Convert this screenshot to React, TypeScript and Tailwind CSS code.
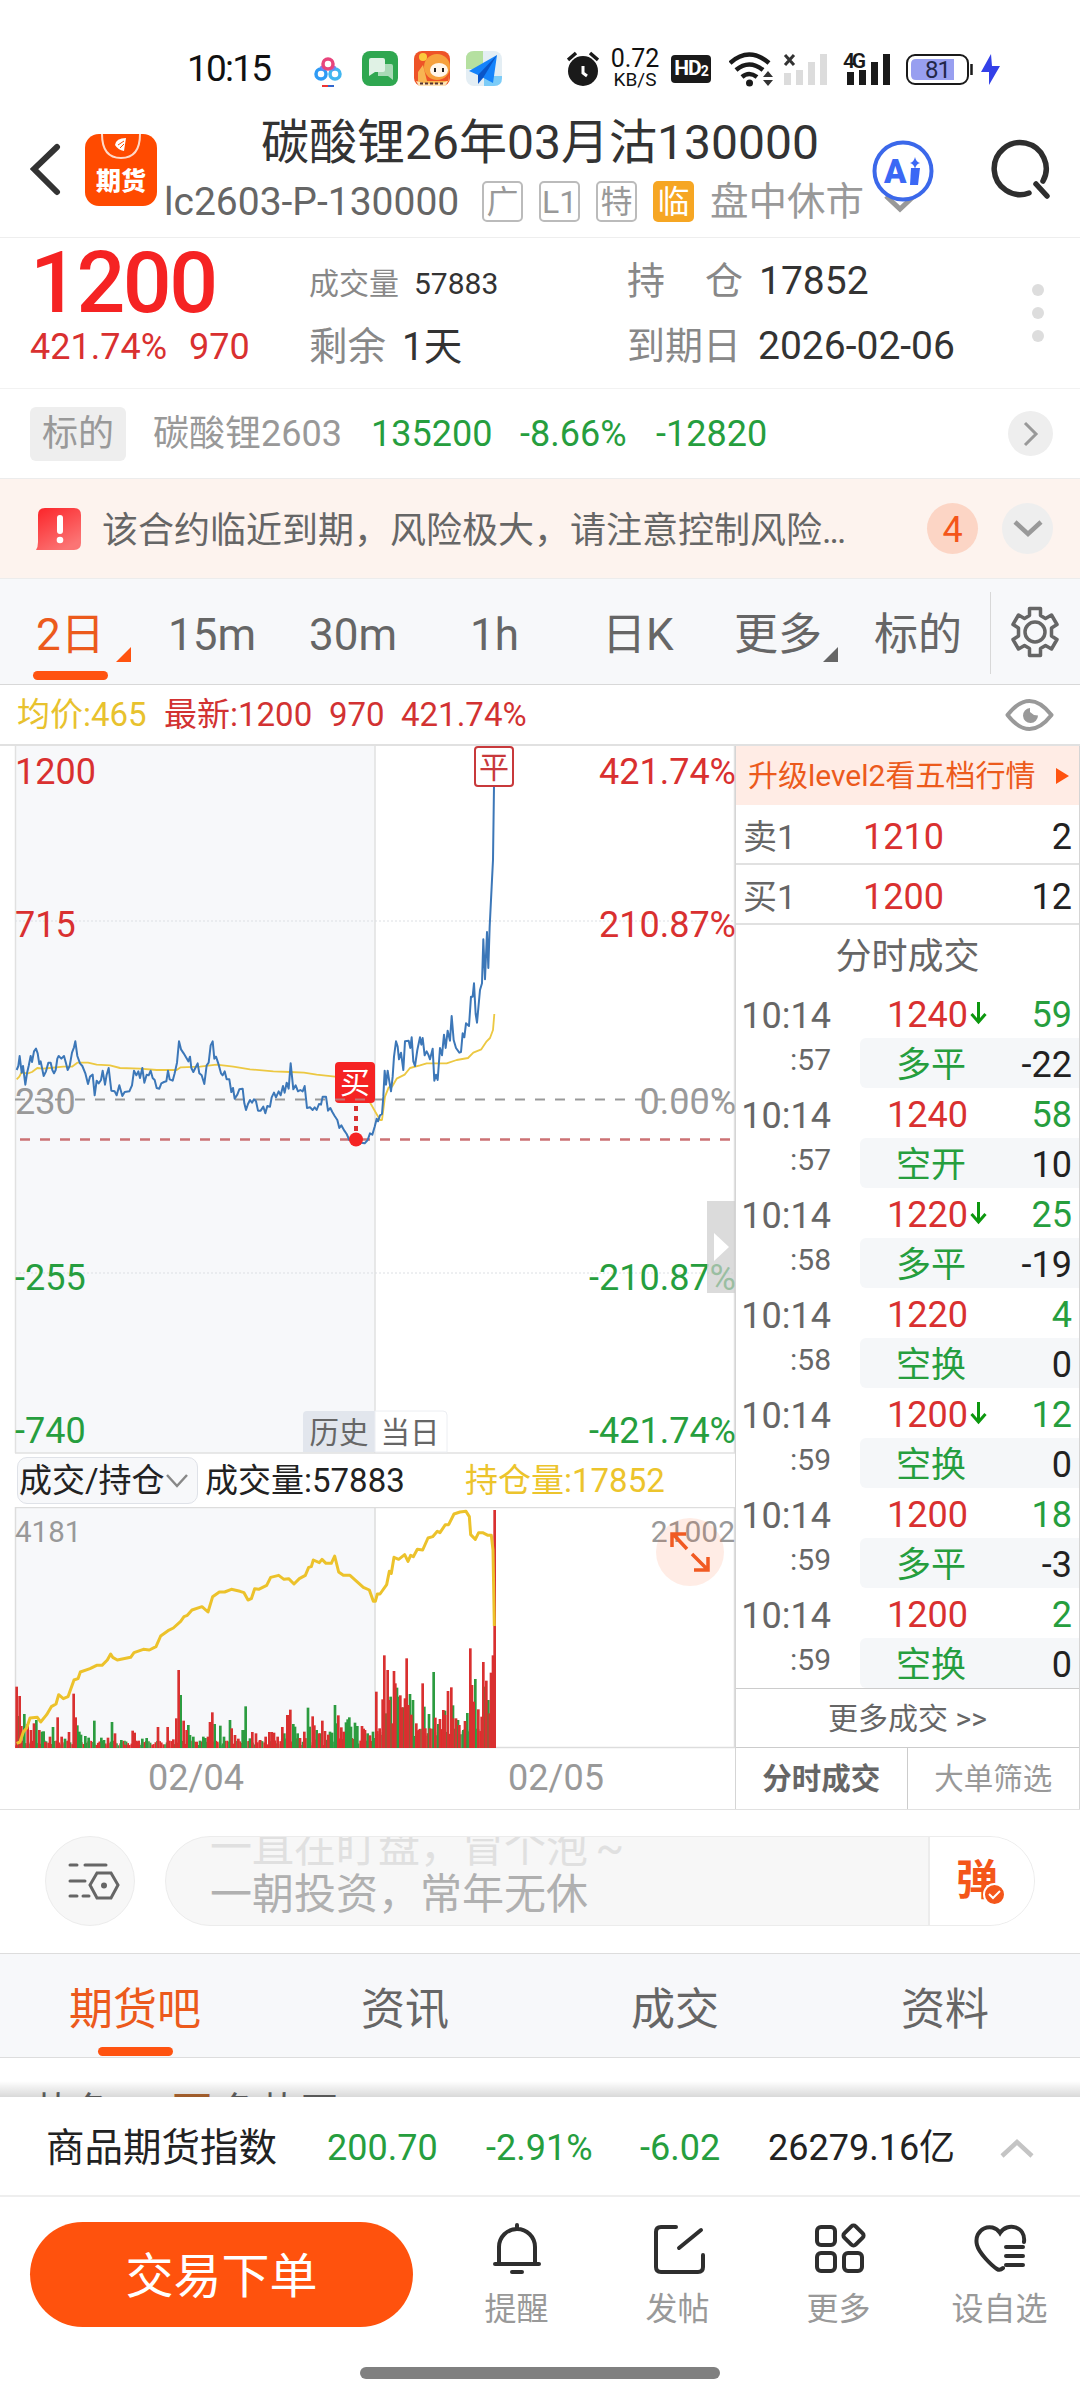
import type { ReactNode } from "react";

const ticks = [
  { sec: "57", price: 1240, down: true, vol: 59, type: "多平", diff: -22 },
  { sec: "57", price: 1240, down: false, vol: 58, type: "空开", diff: 10 },
  { sec: "58", price: 1220, down: true, vol: 25, type: "多平", diff: -19 },
  { sec: "58", price: 1220, down: false, vol: 4, type: "空换", diff: 0 },
  { sec: "59", price: 1200, down: true, vol: 12, type: "空换", diff: 0 },
  { sec: "59", price: 1200, down: false, vol: 18, type: "多平", diff: -3 },
  { sec: "59", price: 1200, down: false, vol: 2, type: "空换", diff: 0 },
];

// chart series are stored in device pixels (3 per layout pixel)
const priceLine =
  "50,990 55,978 59,948 65,998 69,978 76,1034 81,1000 86,978 92,948 96,966 102,934 108,926 113,940 118,972 122,964 131,1008 138,994 145,968 152,968 157,990 162,1000 167,990 172,956 176,948 184,956 192,948 198,970 203,990 209,978 216,938 222,922 226,904 232,948 240,970 247,978 256,1000 264,1032 270,1010 278,1004 284,1066 290,1022 296,1030 303,1020 308,992 315,1034 320,1004 326,984 334,1052 344,1054 350,1066 358,1036 367,1068 374,1056 388,1054 396,1036 402,992 409,1006 415,994 420,1014 427,984 433,1028 440,1004 446,1006 452,992 458,1014 464,1020 470,1044 478,1046 484,1030 492,1026 499,1024 504,992 509,1018 518,1022 524,1000 531,968 537,904 543,928 551,940 558,952 565,964 570,950 574,984 580,996 586,984 593,970 598,1000 605,1006 613,1032 620,976 626,968 632,916 638,904 643,956 648,950 656,974 663,1000 668,1006 674,994 680,1018 688,1018 694,1056 699,1044 704,1076 712,1064 718,1048 728,1046 733,1090 738,1110 744,1092 750,1080 756,1088 762,1078 768,1084 774,1112 782,1112 790,1100 796,1120 802,1098 810,1100 815,1072 822,1058 828,1072 836,1054 842,1066 849,1038 854,1058 860,1028 866,1046 872,970 880,1048 887,1036 894,1054 901,1050 908,1054 914,1038 921,1104 930,1102 938,1110 944,1102 950,1110 957,1092 963,1094 968,1070 978,1070 984,1112 991,1104 997,1116 1004,1128 1012,1140 1018,1164 1024,1156 1033,1172 1040,1182 1048,1200 1068,1200 1084,1208 1094,1210 1103,1200 1110,1180 1117,1184 1124,1160 1130,1136 1134,1144 1140,1126 1146,1122 1150,1070 1154,992 1158,1034 1163,992 1168,1024 1173,1054 1178,1010 1182,950 1188,904 1193,920 1197,958 1203,938 1210,990 1215,904 1226,902 1231,924 1235,892 1240,964 1245,978 1252,930 1260,892 1264,914 1268,894 1274,946 1280,934 1285,944 1290,958 1298,926 1303,1022 1308,1004 1313,1020 1320,924 1326,946 1332,884 1337,924 1343,872 1350,902 1355,828 1361,900 1368,924 1378,938 1383,936 1388,880 1393,892 1398,850 1407,858 1413,770 1418,770 1422,730 1427,822 1431,848 1440,750 1446,730 1450,598 1455,718 1461,576 1465,684 1469,560 1475,440 1479,360 1482,140";

const avgLine =
  "50,1018 58,1010 64,998 84,1000 96,996 112,984 128,986 150,984 190,980 216,980 232,968 264,968 290,974 330,976 360,984 420,986 470,990 530,990 542,982 600,980 650,974 700,980 750,988 820,994 870,996 912,998 950,1004 1005,1010 1040,1020 1100,1070 1140,1140 1146,1140 1155,1070 1166,1042 1176,1040 1190,1016 1214,1004 1230,984 1260,976 1280,970 1340,970 1370,960 1404,954 1420,938 1444,928 1460,904 1470,894 1479,870 1483,822";

const openInterestLine =
  "50,1120 60,1116 70,1086 80,1074 90,1044 112,1042 122,1056 140,1034 154,1010 168,1002 176,974 190,986 204,980 222,930 234,926 241,906 270,896 290,886 306,886 322,870 332,852 338,862 352,870 392,862 402,848 430,838 448,840 468,830 482,798 504,782 520,774 542,754 552,740 562,736 576,720 606,710 624,726 638,680 658,666 674,666 694,658 720,664 732,668 744,690 754,686 764,656 776,658 800,646 812,622 836,616 852,628 866,626 882,642 898,626 916,616 926,592 934,590 940,570 958,578 966,568 978,580 994,580 1004,558 1016,606 1030,616 1050,616 1070,634 1090,652 1108,660 1120,694 1126,694 1132,672 1140,672 1160,644 1168,604 1174,610 1182,562 1196,568 1214,554 1224,574 1232,556 1240,560 1252,538 1268,540 1284,504 1298,500 1312,484 1320,488 1336,464 1346,464 1362,432 1380,426 1398,424 1408,440 1412,494 1426,508 1436,488 1448,488 1464,496 1474,496 1479,540 1483,768";

const redBars =
  "50,950 59,978 64,1068 83,1062 93,1080 102,1060 118,1080 136,1116 150,1100 173,1042 185,1100 207,1086 221,971 227,1042 297,1118 324,1103 345,1090 374,1124 384,1124 398,1082 404,1088 416,1112 474,1071 503,1071 520,1108 529,1045 536,900 551,1052 560,1080 590,1115 624,1100 630,1056 637,1027 695,1075 705,1095 715,1106 757,1086 768,1090 780,1110 797,1100 808,1086 815,1086 822,1088 833,1100 847,1071 862,1035 867,1035 871,1019 900,1104 913,1085 938,1039 943,1066 957,1090 967,1052 975,1083 985,1094 1015,1036 1024,1072 1031,1085 1086,1068 1091,1076 1095,1080 1110,1096 1129,965 1139,1075 1148,988 1153,856 1163,900 1168,990 1178,1060 1182,903 1186,940 1201,976 1206,1012 1215,985 1220,865 1225,1005 1234,1034 1249,1060 1258,1080 1268,940 1276,1075 1290,1075 1306,1043 1320,1047 1330,1020 1335,1035 1344,963 1354,952 1359,1045 1368,1045 1378,1065 1395,1053 1411,835 1416,945 1421,995 1435,1018 1445,1040 1450,876 1459,932 1469,1030 1473,908 1479,856 1484,420";

const greenBars =
  "54,1038 73,1032 109,1050 126,1085 131,1084 159,1071 195,1106 232,1066 238,1085 243,1094 256,1098 266,1103 283,1052 304,1103 312,1110 336,1056 364,1110 427,1106 440,1104 542,975 565,1065 570,1095 580,1100 600,1112 610,1100 616,1104 644,1062 661,1067 672,1100 690,1050 728,1080 732,1080 737,1009 750,1105 853,1090 880,1062 885,1070 893,1090 924,1013 929,1070 950,1080 961,1090 990,1085 996,1088 1005,1005 1010,1060 1038,1057 1043,1048 1048,1042 1053,1070 1065,1058 1072,1068 1103,1090 1119,1085 1158,1030 1172,980 1191,953 1196,980 1210,1012 1230,972 1239,990 1273,1010 1287,1032 1301,906 1315,1062 1335,1022 1359,1006 1374,1050 1390,1080 1402,1029 1426,927 1454,950 1465,990";

const toPoints = (s: string) =>
  s.split(" ").map((p) => p.split(",").map(Number));

const App = () => {
  return (
    <div className="w-[1080px] h-[2400px] overflow-hidden bg-white flex flex-col text-[#333] leading-none whitespace-nowrap [font-family:Roboto,'Noto_Sans_CJK_SC',sans-serif]">
      <StatusBar />
      <Header />
      <Quote />
      <Underlying />
      <Warning />
      <PeriodTabs />
      <div className="h-[59px] shrink-0 flex items-center pl-[17px] pr-[26px] text-[33px] text-[#d23232]">
        <span className="text-[#e8c22e] w-[147px]">均价:465</span>
        <span className="w-[165px]">最新:1200</span>
        <span className="w-[72px]">970</span>
        <span>421.74%</span>
        <svg className="ml-auto" width="49" height="32" viewBox="0 0 49 32" fill="none">
          <path d="M2.500 16Q24.500-12 46.500 16Q24.500 44 2.500 16Z" stroke="#999" strokeWidth="4" strokeLinejoin="round" />
          <path d="M25 9a7.500 7.500 0 1 0 8 7.500l-4-.5-4-3Z" fill="#999" />
        </svg>
      </div>
      <div className="h-[1066px] shrink-0 flex border-t-2 border-b border-[#e1e1e1]">
        <div className="w-[735px]">
          <PriceChart />
          <div className="h-[53px] flex items-center pl-[17px] text-[33px] text-[#222]">
            <div className="w-[181px] h-[47px] rounded-[10px] border border-[#dfe2e8] bg-[#f7f8fa] flex items-center pl-px">
              成交/持仓
              <svg width="24" height="16" viewBox="0 0 24 16" fill="none" stroke="#888" strokeWidth="2.500">
                <path d="M2 2l10 11L22 2" />
              </svg>
            </div>
            <span className="ml-[7px] w-[260px]">成交量:57883</span>
            <span className="text-[#ecc42c]">持仓量:17852</span>
          </div>
          <VolumeChart />
        </div>
        <Trades />
      </div>
      <Comment />
      <div className="h-[105px] mt-[27px] shrink-0 grid grid-cols-4 bg-[#f7f8fa] border-y border-[#ddd] text-[44px] text-[#666]">
        <div className="flex flex-col items-center text-[#ec5a1c]">
          <span className="mt-[34px]">期货吧</span>
          <i className="mt-[15px] w-[75px] h-[9px] rounded-full bg-[#ff5310]" />
        </div>
        <span className="text-center mt-[34px]">资讯</span>
        <span className="text-center mt-[34px]">成交</span>
        <span className="text-center mt-[34px]">资料</span>
      </div>
      <div className="h-[39px] shrink-0 relative overflow-hidden pl-[34px] pt-[35px] text-[40px] text-[#666]">
        <span>热色</span>
        <span className="ml-[58px] text-[#b86a32]">百</span>
        <span className="ml-2">色热司</span>
        <div className="absolute inset-x-0 bottom-0 h-4 bg-gradient-to-b from-transparent to-black/15" />
      </div>
      <div className="h-[100px] shrink-0 flex items-center pl-[46px] pr-[46px] pt-1 border-b-2 border-[#eee] text-[36px] text-[#269e3e]">
        <span className="w-[281px] text-[38.500px] text-[#222]">商品期货指数</span>
        <span className="w-[159px]">200.70</span>
        <span className="w-[154px]">-2.91%</span>
        <span className="w-[128px]">-6.02</span>
        <span className="text-[#222]">26279.16亿</span>
        <svg className="ml-auto" width="34" height="20" viewBox="0 0 34 20" fill="none" stroke="#c4c4c4" strokeWidth="4.500">
          <path d="M2 18L17 4l15 14" />
        </svg>
      </div>
      <BottomBar />
      <div className="mx-auto mt-[17px] w-[360px] h-3 rounded-full bg-[#808080]" />
    </div>
  );
};

const StatusBar = () => (
  <div className="h-[104px] shrink-0 flex items-center pt-[33px] pl-[187px]">
    <span className="w-[123px] text-[37px] tracking-[-1.800px] text-[#111]">10:15</span>
    <svg width="192" height="36" viewBox="310 51 192 36" fill="none">
      <g strokeWidth="3.500">
        <circle cx="321" cy="74" r="5" stroke="#2f9bf5" />
        <circle cx="335" cy="74" r="5" stroke="#41b6f0" />
        <path d="M324 70l-3-4M332 70l3-4" stroke="#7a7ff0" />
        <circle cx="328" cy="64" r="5" stroke="#e8447c" />
      </g>
      <path d="M322 86h6" stroke="#e33" strokeWidth="2" />
      <path d="M328 86h6" stroke="#36c" strokeWidth="2" />
      <rect x="362" y="51" width="36" height="35" rx="8" fill="#2fa750" />
      <path d="M381 64h10q2 0 2 2v14l-5-4h-10v-6Z" fill="#a9dab6" />
      <rect x="369" y="58" width="16" height="14" rx="2" fill="#e0f2e5" />
      <path d="M369 70v6l6-4Z" fill="#e0f2e5" />
      <rect x="414" y="51" width="36" height="35" rx="8" fill="#ee5327" />
      <circle cx="437" cy="67" r="13" fill="#f6a13d" />
      <path d="M418 84v-12l5-7 4 16h22v-6q0 11-8 11h-20Z" fill="#f8b552" />
      <circle cx="423" cy="57" r="4" fill="#fbcb3d" />
      <ellipse cx="439" cy="70" rx="9" ry="7" fill="#fff6ea" />
      <path d="M435 68v4M443 68v4" stroke="#222" strokeWidth="2" />
      <path d="M416 81q17 6 32 0l-3 5h-26Z" fill="#fde4b8" />
      <path d="M420 83.500h25" stroke="#533" strokeDasharray="3 2" strokeWidth="2" />
      <rect x="466" y="51" width="36" height="35" rx="8" fill="#e4eef4" />
      <path d="M466 69V59q0-8 8-8h9v18Z" fill="#b5e0a0" />
      <path d="M484 76h18v2q0 8-8 8h-10Z" fill="#7cccf8" />
      <path d="M497 55l-28 16 9 4 15 8Z" fill="#1583fb" />
      <path d="M497 55l-19 20v9l5-6Z" fill="#0a55c8" />
    </svg>
    <svg className="ml-[65px]" width="32" height="36" viewBox="567 50 32 36" fill="#1a1a1a">
      <circle cx="583" cy="70" r="15" />
      <path d="M568 59l8-7M598 59l-8-7" stroke="#1a1a1a" strokeWidth="3.500" />
      <path d="M583 65v7l4 3" stroke="#fff" strokeWidth="3" fill="none" />
    </svg>
    <div className="ml-3 w-[48px] flex flex-col items-center text-[#111]">
      <span className="text-[25px] leading-[22px]">0.72</span>
      <span className="text-[19px] leading-[19px]">KB/S</span>
    </div>
    <div className="ml-3 w-10 h-7 rounded-[4px] bg-[#1a1a1a] text-white font-bold flex items-center justify-center text-[21px] tracking-[-1px]">
      HD<span className="text-[14px] pt-1">2</span>
    </div>
    <svg className="ml-[18px]" width="272" height="36" viewBox="729 50 272 36" fill="none">
      <g stroke="#1a1a1a" strokeWidth="4.500">
        <path d="M730 62q19-17 39 0M736 69q13-11 27 0M742 76q7-6 15 0" />
      </g>
      <circle cx="749.500" cy="82" r="3.500" fill="#1a1a1a" />
      <path d="M763 76l5-6 5 6ZM763 79l5 6 5-6Z" fill="#333" />
      <path d="M785 54l9 10M794 54l-9 10" stroke="#333" strokeWidth="3" />
      <path d="M784 72h7v12h-7ZM796 69h7v15h-7ZM808 61h7v23h-7ZM820 53h7v31h-7Z" fill="#dcdcdc" />
      <text x="843" y="67" fontSize="21" fontWeight="600" fill="#1a1a1a" textLength="23">4G</text>
      <path d="M847 71h7v13h-7ZM859 69h7v15h-7ZM871 61h7v23h-7ZM883 53h7v31h-7Z" fill="#1a1a1a" />
      <rect x="907" y="54" width="61" height="29" rx="8" stroke="#1a1a1a" strokeWidth="2" />
      <path d="M971.500 63v11" stroke="#1a1a1a" strokeWidth="2.500" />
      <path d="M954 58H916q-5 0-5 5v11q0 5 5 5h38Z" fill="#989ff0" />
      <text x="925" y="77" fontSize="24" fill="#222748" textLength="26">81</text>
      <path d="M991 53l-10 18h8v13l11-19h-8Z" fill="#3340e8" />
    </svg>
  </div>
);

const Badge = ({ children }: { children: ReactNode }) => (
  <span className="w-[41px] h-[41px] mr-4 rounded-[5px] border-2 border-[#bbb] text-[32px] text-[#999] flex items-center justify-center">
    {children}
  </span>
);

const Header = () => (
  <div className="h-[134px] shrink-0 flex border-b border-[#eee]">
    <svg className="ml-[30px] mt-[37px]" width="34" height="56" viewBox="30 142 34 56" fill="none" stroke="#333" strokeWidth="6" strokeLinecap="round">
      <path d="M57 148L34 170l23 23" />
    </svg>
    <div className="ml-[21px] mt-[30px] w-[72px] h-[72px] rounded-[14px] bg-[#ff4a00] flex flex-col items-center text-white">
      <svg width="42" height="26" viewBox="0 0 42 26" fill="none">
        <path d="M2 0q0 24 19 24T40 0" stroke="#ffd9c8" strokeWidth="2" />
        <path d="M15 11Q16 4 26 4l-2 13q-6-1-9-6Z" fill="#fff" />
        <path d="M18 11l6-4M20 14l4-4" stroke="#ff4a00" />
      </svg>
      <span className="mt-[9px] text-[25px] font-black">期货</span>
    </div>
    <div className="ml-[8px] w-[701px]">
      <div className="mt-[15px] w-[750px] text-center text-[48px]">碳酸锂26年03月沽130000</div>
      <div className="mt-[14px] flex items-center">
        <span className="w-[318px] pt-0.5 text-[39px] text-[#666] -ml-px">lc2603-P-130000</span>
        <Badge>广</Badge>
        <Badge>L1</Badge>
        <Badge>特</Badge>
        <span className="w-[41px] h-[41px] rounded-[5px] bg-[#f6a623] text-white text-[32px] flex items-center justify-center">临</span>
        <span className="ml-4 pt-0.5 text-[38.500px] text-[#999]">盘中休市</span>
      </div>
    </div>
    <svg className="mt-8" width="190" height="80" viewBox="866 136 190 80" fill="none">
      <path d="M886 196l14 13 14-13" stroke="#999" strokeWidth="5" />
      <circle cx="903" cy="171" r="28.500" fill="#fff" stroke="#3b68ea" strokeWidth="4" />
      <text x="884" y="183" fontSize="33" fontWeight="900" fill="#3b68f5" fontFamily="Roboto">
        A
      </text>
      <path d="M911 168h9l-2 17h-8Z" fill="#3b68f5" />
      <path d="M915 157q1 5 5 6-4 1-5 6-1-5-5-6 4-1 5-6Z" fill="#3b68f5" />
      <path d="M1029 193a26 26 0 1 1 14-12M1036 184l11 12" stroke="#2e2e2e" strokeWidth="5.500" strokeLinecap="round" />
    </svg>
  </div>
);

const Quote = () => (
  <div className="h-[151px] shrink-0 flex border-b border-[#f2f2f2]">
    <div className="ml-[30px] w-[279px] text-[#d93030]">
      <div className="mt-[6px] h-[78px] text-[86px] leading-[78px] tracking-[-2.500px] font-medium text-[#f52323]">1200</div>
      <div className="mt-[7px] text-[36px] leading-[37px] flex">
        <span className="w-[159px]">421.74%</span>
        <span>970</span>
      </div>
    </div>
    <div className="w-[318px] flex flex-col text-[#888]">
      <div className="mt-[26px] h-10 flex items-center text-[30px]">
        成交量<span className="ml-[15px] text-[#333]">57883</span>
      </div>
      <div className="mt-[23px] h-10 flex items-center text-[38.500px]">
        剩余<span className="ml-4 text-[#333]">1天</span>
      </div>
    </div>
    <div className="w-[402px] flex flex-col text-[38px] text-[#888]">
      <div className="mt-[23px] h-10 flex items-center">
        <span className="w-[116px] flex justify-between mr-[16px]">
          <span>持</span>
          <span>仓</span>
        </span>
        <span className="text-[#333] text-[39px]">17852</span>
      </div>
      <div className="mt-[25px] h-10 flex items-center">
        到期日<span className="ml-[17px] text-[#333] text-[39px]">2026-02-06</span>
      </div>
    </div>
    <div className="mt-[46px] ml-[3px] flex flex-col gap-[11px]">
      <i className="size-3 rounded-full bg-[#ddd]" />
      <i className="size-3 rounded-full bg-[#ddd]" />
      <i className="size-3 rounded-full bg-[#ddd]" />
    </div>
  </div>
);

const Underlying = () => (
  <div className="h-[89px] shrink-0 flex items-center px-[30px] text-[36px] text-[#269e3e]">
    <span className="w-[96px] h-[54px] rounded-[6px] bg-[#eee] text-[#999] flex items-center justify-center">标的</span>
    <span className="ml-[27px] w-[218px] text-[#999]">碳酸锂2603</span>
    <span className="w-[149px]">135200</span>
    <span className="w-[136px]">-8.66%</span>
    <span>-12820</span>
    <div className="ml-auto -mr-[3px] size-[45px] rounded-full bg-[#eee] flex items-center justify-center">
      <svg width="16" height="26" viewBox="0 0 16 26" fill="none" stroke="#999" strokeWidth="3">
        <path d="M2 2l11 11L2 24" />
      </svg>
    </div>
  </div>
);

const Warning = () => (
  <div className="h-[101px] shrink-0 flex items-center bg-[#fdf3ee] border-y border-[#ececec] pl-[36px] text-[36px] text-[#666]">
    <svg width="46" height="44" viewBox="0 0 46 44">
      <defs>
        <linearGradient id="alert" x1="0" y1="0" x2="0.600" y2="1">
          <stop offset="0" stopColor="#fb2328" />
          <stop offset="1" stopColor="#fb7474" />
        </linearGradient>
      </defs>
      <path d="M2 8q0-7 7-7h29q7 0 7 7v28q0 7-7 7H0q2-3 2-8Z" fill="url(#alert)" />
      <rect x="21" y="8" width="6" height="19" rx="3" fill="#fff" />
      <circle cx="24" cy="33" r="3.300" fill="#fff" />
    </svg>
    <span className="ml-[20px] pt-[5px]">
      该合约临近到期，风险极大，请注意控制风险<span className="tracking-[-2px]">...</span>
    </span>
    <span className="ml-auto size-[51px] pt-[3px] rounded-full bg-[#fcd5c5] text-[#f4561a] flex items-center justify-center">4</span>
    <div className="ml-6 mr-[27px] size-[51px] rounded-full bg-[#eee] flex items-center justify-center">
      <svg width="30" height="18" viewBox="0 0 30 18" fill="none" stroke="#999" strokeWidth="4.500">
        <path d="M2 2l13 12L28 2" />
      </svg>
    </div>
  </div>
);

const PeriodTabs = () => (
  <div className="h-[106px] shrink-0 flex bg-[#f7f8fa] border-b border-[#d8d8d8] text-[44px] text-[#666]">
    <div className="ml-[33px] w-[135px] text-[#ec5a1c]">
      <div className="mt-[34px] flex items-end">
        <span className="pl-[3px]">2日</span>
        <svg className="ml-[11px] -mb-[5px]" width="15" height="15" viewBox="0 0 15 15" fill="#ff5310">
          <path d="M15 0v15H0Z" />
        </svg>
      </div>
      <div className="mt-[14px] w-[75px] h-[9px] rounded-full bg-[#ff5310]" />
    </div>
    <span className="mt-[34px] w-[141px]">15m</span>
    <span className="mt-[34px] w-[161px]">30m</span>
    <span className="mt-[34px] w-[132px]">1h</span>
    <span className="mt-[34px] w-[132px]">日K</span>
    <span className="mt-[34px] w-[140px] flex items-end h-[44px]">
      更多
      <svg className="ml-px -mb-[5px]" width="15" height="15" viewBox="0 0 15 15" fill="#666">
        <path d="M15 0v15H0Z" />
      </svg>
    </span>
    <span className="mt-[34px] w-[116px]">标的</span>
    <div className="mt-[13px] h-[82px] w-px bg-[#d8d8d8]" />
    <svg className="ml-[20px] mt-[27px]" width="48" height="52" viewBox="-24 -26 48 52" fill="none" stroke="#666" strokeWidth="3.500" strokeLinejoin="round">
      <path d="M-5.500-23.500h11v7l5 3 6-3.500 5.500 9.500-5.500 3.500v8l5.500 3.500-5.500 9.500-6-3.500-5 3v7h-11v-7l-5-3-6 3.500-5.500-9.500 5.500-3.500v-8l-5.500-3.500 5.500-9.500 6 3.500 5-3Z" />
      <circle r="10" />
    </svg>
  </div>
);

const PriceChart = () => (
  <svg className="block" width="735" height="708" viewBox="0 746 735 708" fill="none" fontSize="36">
    <rect x="15" y="744" width="360" height="709" fill="#f7f8fa" />
    <path d="M15.500 744v709M375 744v709M734.500 744v709M15 1453h720" stroke="#e1e1e1" strokeWidth="1.500" />
    <path d="M15 921h720M15 1273h720" stroke="#dcdfe3" strokeDasharray="2 2" />
    <path d="M15 1099.500h720" stroke="#999" strokeWidth="2" strokeDasharray="10 10" />
    <path d="M20 1139.500h715" stroke="#cc7274" strokeWidth="2.500" strokeDasharray="10 10" />
    <g transform="translate(0 740) scale(0.33333)" strokeLinejoin="round">
      <polyline points={avgLine} stroke="#ecc842" strokeWidth="5.500" />
      <polyline points={priceLine} stroke="#3c77b8" strokeWidth="6" />
    </g>
    <g fill="#d93030">
      <text x="15" y="784">1200</text>
      <text x="15" y="937">715</text>
      <g textAnchor="end">
        <text x="736" y="784">421.74%</text>
        <text x="736" y="937">210.87%</text>
      </g>
    </g>
    <g fill="#999">
      <text x="15" y="1114">230</text>
      <text x="736" y="1114" textAnchor="end">0.00%</text>
    </g>
    <g fill="#269e3e">
      <text x="15" y="1290">-255</text>
      <text x="15" y="1443">-740</text>
      <g textAnchor="end">
        <text x="736" y="1290">-210.87%</text>
        <text x="736" y="1443">-421.74%</text>
      </g>
    </g>
    <path d="M356 1106v28" stroke="#d93030" strokeWidth="4" strokeDasharray="5 5" />
    <circle cx="356" cy="1139.500" r="7" fill="#f52323" />
    <rect x="335" y="1062" width="40" height="41" rx="4" fill="#f52323" />
    <path d="M335 1099.500h10M355 1099.500h10" stroke="#c47474" strokeWidth="2" />
    <text x="355" y="1093" fontSize="30" fill="#fff" textAnchor="middle">买</text>
    <rect x="475" y="747" width="38" height="39" rx="3" fill="#fff" stroke="#c8393b" strokeWidth="2" />
    <text x="494" y="778" fontSize="30" fill="#c8393b" textAnchor="middle">平</text>
    <path d="M707 1201h28v92h-28Z" fill="#ccc" fillOpacity="0.700" />
    <path d="M714 1233l15 14-15 14Z" fill="#fff" />
    <path d="M375 1411h-68q-4 0-4 4v37h72Z" fill="#e2e6ed" />
    <path d="M375 1411h68q4 0 4 4v37h-72Z" fill="#fff" stroke="#eceef2" />
    <g fontSize="29.500" fill="#666" textAnchor="middle">
      <text x="339" y="1443">历史</text>
      <text x="410" y="1443">当日</text>
    </g>
  </svg>
);

const VolumeChart = () => (
  <svg className="block" width="735" height="300" viewBox="0 1507 735 300" fill="none">
    <rect x="15" y="1507" width="360" height="240" fill="#f7f8fa" />
    <path d="M15 1507.500h720M15.500 1507v240M375 1507v240M734.500 1507v240M15 1747.500h720" stroke="#ddd" strokeWidth="1.500" />
    <text x="15" y="1542" fontSize="29.500" fill="#999">4181</text>
    <text x="735" y="1542" fontSize="30" fill="#999" textAnchor="end">21002</text>
    <g transform="translate(0 1370) scale(0.33333)">
      {/* quiet minutes between the larger prints */}
      {Array.from({ length: 299 }, (_, i) => {
        const h = (i > 224 ? 36 : 8) + Math.abs(Math.sin(i * 2.7) * (i > 160 ? 22 : 14));
        return <rect key={i} x={46 + i * 4.8} y={1134 - h} width="5" height={h} fill={i % 5 < 3 ? "#e22b2b" : "#3d9440"} />;
      })}
      {toPoints(greenBars).map(([x, y]) => (
        <rect key={x} x={x - 4} y={y} width="8" height={1134 - y} fill="#2c9c40" />
      ))}
      {toPoints(redBars).map(([x, y]) => (
        <rect key={x} x={x - 4} y={y} width="8" height={1134 - y} fill="#d93030" />
      ))}
      <polyline points={openInterestLine} stroke="#ecc22b" strokeWidth="9" strokeLinejoin="round" />
    </g>
    <circle cx="690" cy="1552" r="34" fill="#ff5310" fillOpacity="0.110" />
    <path d="M687 1549l-14-15M672 1547v-13h14M692 1554l15 15M694 1570h14v-13" stroke="#f15a22" strokeWidth="3.500" />
    <g fontSize="36" fill="#999" textAnchor="middle">
      <text x="196" y="1790">02/04</text>
      <text x="556" y="1790">02/05</text>
    </g>
  </svg>
);

const Trades = () => (
  <div className="w-[345px] border-x border-[#d5d5d5] flex flex-col text-[36px] text-[#666]">
    <div className="h-[59px] flex items-center bg-[#ffece5] pl-[12px] text-[30px] text-[#ec5a1c]">
      升级level2看五档行情
      <svg className="ml-auto mr-[10px]" width="13" height="16" viewBox="0 0 13 16" fill="#ff5310">
        <path d="M0 0l13 8-13 8Z" />
      </svg>
    </div>
    <div className="h-[60px] flex items-center border-b-2 border-[#e1e1e1] px-[7px] pt-1.5">
      <span className="w-[120px] text-[34px]">卖1</span>
      <span className="text-[#d93030]">1210</span>
      <span className="ml-auto text-[#222]">2</span>
    </div>
    <div className="h-[60px] flex items-center border-b-2 border-[#e1e1e1] px-[7px] pt-1.5">
      <span className="w-[120px] text-[34px]">买1</span>
      <span className="text-[#d93030]">1200</span>
      <span className="ml-auto text-[#222]">12</span>
    </div>
    <div className="h-[63px] flex items-center justify-center">分时成交</div>
    {ticks.map((t, i) => (
      <div key={i} className="h-[100px] shrink-0 flex">
        <div className="w-[95px] pl-[7px] pt-2.5 flex flex-col items-end">
          <span>10:14</span>
          <span className="mt-[11px] text-[30px]">:{t.sec}</span>
        </div>
        <div className="flex-1">
          <div className="h-[50px] flex items-center pl-[56px] pr-[7px] pt-1">
            <span className="text-[#d93030]">{t.price}</span>
            {t.down && (
              <svg className="ml-0.5 -mt-1" width="17" height="24" viewBox="0 0 17 24" fill="none" stroke="#0c970f" strokeWidth="3">
                <path d="M8.500 1v20M1.500 13l7 8 7-8" />
              </svg>
            )}
            <span className="ml-auto text-[#269e3e]">{t.vol}</span>
          </div>
          <div className="ml-[29px] h-[50px] rounded-l-[6px] bg-[#f5f7f9] flex items-center pl-9 pr-[7px] pt-1">
            <span className="text-[35px] text-[#269e3e]">{t.type}</span>
            <span className="ml-auto text-[#222]">{t.diff}</span>
          </div>
        </div>
      </div>
    ))}
    <div className="h-[60px] shrink-0 flex items-center justify-center pt-0.5 border-y border-[#ccc] text-[30px]">更多成交 &gt;&gt;</div>
    <div className="flex-1 grid grid-cols-2 items-stretch text-[29.500px]">
      <span className="flex items-center justify-center pt-0.5 font-bold border-r border-[#ccc]">分时成交</span>
      <span className="flex items-center justify-center pt-0.5 text-[#999]">大单筛选</span>
    </div>
  </div>
);

const Comment = () => (
  <div className="h-[90px] mt-[26px] shrink-0 flex pl-[45px]">
    <div className="size-[90px] rounded-full bg-[#f7f7f7] border border-[#ececec] flex items-center justify-center">
      <svg className="ml-2" width="52" height="38" viewBox="0 0 52 38" fill="none" stroke="#666" strokeWidth="3" strokeLinecap="round">
        <path d="M2 3h7M17 3h21M2 19h15M2 34h7M15 34h6" />
        <path d="M29 11h14l7 12-7 13H29l-7-13Z" />
        <circle cx="36" cy="23.500" r="1.500" fill="#666" />
      </svg>
    </div>
    <div className="ml-[30px] w-[870px] h-[90px] rounded-full overflow-hidden bg-[#f7f7f7] border border-[#ececec] flex">
      <div className="w-[762px] pl-[44px] text-[42px]">
        <div className="-mt-[10px] text-[#e0e0e0]">
          一直在盯盘，冒个泡<span className="tracking-[-3px]"> ~</span>
        </div>
        <div className="mt-[5px] text-[#b0b0b0]">一朝投资，常年无休</div>
      </div>
      <div className="flex-1 bg-white border-l-2 border-[#ececec] flex items-center pl-[26px]">
        <span className="text-[42px] font-bold text-[#f4561a]">弹</span>
        <svg className="-ml-[15px] mt-[26px]" width="23" height="23" viewBox="0 0 23 23" fill="none">
          <circle cx="11.500" cy="11.500" r="10.500" fill="#f4561a" stroke="#fff" strokeWidth="2" />
          <path d="M6 11l4 4 7-7" stroke="#fff" strokeWidth="2" />
        </svg>
      </div>
    </div>
  </div>
);

const Action = ({ label, children }: { label: string; children: ReactNode }) => (
  <div className="w-[161px] flex flex-col items-center text-[32px] text-[#999]">
    <svg width="54" height="54" viewBox="0 0 54 54" fill="none" stroke="#2e2e2e" strokeWidth="4" strokeLinecap="round">
      {children}
    </svg>
    <span className="mt-[17px]">{label}</span>
  </div>
);

const BottomBar = () => (
  <div className="h-[153px] shrink-0 flex pl-[30px] pt-[25px]">
    <div className="w-[384px] h-[105px] rounded-full bg-[#ff520d] text-white text-[48px] flex items-center justify-center pt-1">交易下单</div>
    <div className="ml-[23px] flex">
      <Action label="提醒">
        <path d="M27 3v4M9 42V25a18 18 0 0 1 36 0v17M5 42h44M22 50h10" />
      </Action>
      <Action label="发帖">
        <path d="M25 5H10q-5 0-5 5v35q0 5 5 5h37q5 0 5-5V33M28 26L50 8" />
      </Action>
      <Action label="更多">
        <rect x="5" y="5" width="18" height="18" rx="4" />
        <rect x="5" y="31" width="18" height="18" rx="4" />
        <rect x="32" y="31" width="18" height="18" rx="4" />
        <rect x="33.500" y="5.500" width="16" height="16" rx="3" transform="rotate(45 41.500 13.500)" />
      </Action>
      <Action label="设自选">
        <path d="M51 20c2-16-17-20-24-9C19-1 0 7 4 23c2 8 14 20 20 24q3 2 6-1M33 25h17M33 34h17M33 43h17" />
      </Action>
    </div>
  </div>
);

export default App;
